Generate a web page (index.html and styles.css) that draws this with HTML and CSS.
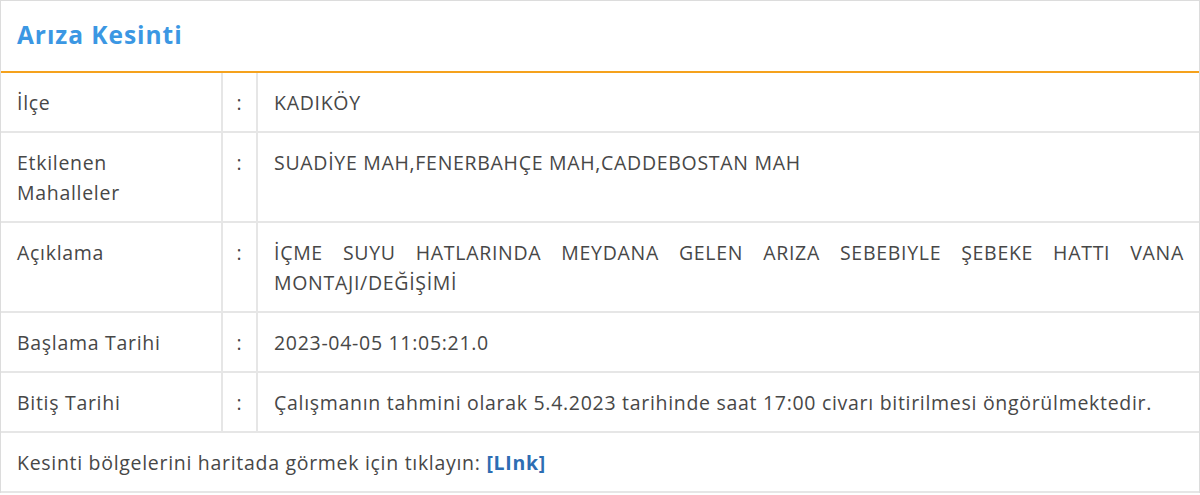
FILE: index.html
```html
<!DOCTYPE html>
<html lang="tr">
<head>
<meta charset="utf-8">
<title>Arıza Kesinti</title>
<link rel="stylesheet" href="styles.css">
</head>
<body>
<div class="panel">
  <div class="panel-head"><h2 class="panel-title">Arıza Kesinti</h2></div>
  <table class="info">
    <colgroup><col class="c-label"><col class="c-sep"><col class="c-val"></colgroup>
    <tr><td>İlçe</td><td class="sep">:</td><td>KADIKÖY</td></tr>
    <tr><td>Etkilenen Mahalleler</td><td class="sep">:</td><td>SUADİYE MAH,FENERBAHÇE MAH,CADDEBOSTAN MAH</td></tr>
    <tr><td>Açıklama</td><td class="sep">:</td><td class="just">İÇME SUYU HATLARINDA MEYDANA GELEN ARIZA SEBEBIYLE ŞEBEKE HATTI VANA MONTAJI/DEĞİŞİMİ</td></tr>
    <tr><td>Başlama Tarihi</td><td class="sep">:</td><td>2023-04-05 11:05:21.0</td></tr>
    <tr><td>Bitiş Tarihi</td><td class="sep">:</td><td>Çalışmanın tahmini olarak 5.4.2023 tarihinde saat 17:00 civarı bitirilmesi öngörülmektedir.</td></tr>
    <tr><td colspan="3">Kesinti bölgelerini haritada görmek için tıklayın: <a class="link" href="#">[LInk]</a></td></tr>
  </table>
</div>
</body>
</html>
```
FILE: styles.css
```css
* { box-sizing: border-box; }
html, body { margin: 0; padding: 0; background: #fff; }
body {
  font-family: "Open Sans", "Noto Sans", sans-serif;
  font-size: 19.5px;
  letter-spacing: 0.7px;
  color: #474747;
}
.panel {
  width: 1200px;
  border: 1px solid #dcdcdc;
  border-bottom: none;
}
.panel-head {
  height: 72px;
  border-bottom: 2px solid #f5a21d;
  padding: 0 16px;
  display: flex;
  align-items: center;
}
.panel-title {
  margin: 0;
  font-size: 24.5px;
  font-weight: 700;
  letter-spacing: 0.95px;
  color: #3b97e3;
  line-height: 1;
  padding-bottom: 2px;
}
.info {
  width: 100%;
  border-collapse: collapse;
  table-layout: fixed;
}
.c-label { width: 221px; }
.c-sep { width: 35px; }
.info td {
  border: 2px solid #e6e6e6;
  border-top: none;
  padding: 15px 15px 13px 16px;
  line-height: 30px;
  vertical-align: top;
}
.info tr td:first-child { border-left: none; }
.info tr td:last-child { border-right: none; }
.info td.sep { padding-left: 0; padding-right: 0; text-align: center; }
.info td.just { text-align: justify; padding-right: 15px; }
.link {
  color: #2d6db3;
  font-weight: 700;
  text-decoration: none;
}
```
